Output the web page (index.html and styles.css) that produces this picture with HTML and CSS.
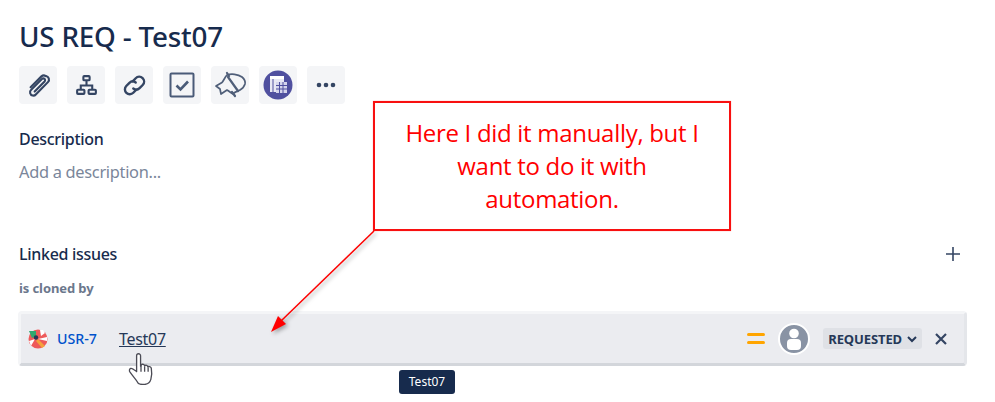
FILE: index.html
```html
<!DOCTYPE html>
<html lang="en">
<head>
<meta charset="utf-8">
<title>US REQ - Test07</title>
<link rel="stylesheet" href="styles.css">
</head>
<body>
<main class="issue">
  <h1 class="title">US REQ - Test07</h1>
  <div class="toolbar">
    <button class="tool"><svg viewBox="0 0 24 24" width="27" height="27" fill="none" stroke="#344563" stroke-width="1.900" stroke-linecap="round"><path d="M18.500 3.600a3.200 3.200 0 0 1 1.900 5.400L9.600 20a2.900 2.900 0 0 1-5-1.100 3 3 0 0 1 .9-3.100L15 6.200a1.600 1.600 0 0 1 2.400 2.200L8.600 17.400"/><path d="M5 13.500 14.600 3.900a3.400 3.400 0 0 1 3.900-.3"/></svg></button>
    <button class="tool"><svg viewBox="0 0 24 24" width="25" height="25" fill="none" stroke="#344563" stroke-width="2"><rect x="9" y="3" width="6" height="4" rx=".8"/><rect x="3" y="16" width="7" height="4" rx=".8"/><rect x="14" y="16" width="7" height="4" rx=".8"/><path d="M12 7v5M6.500 16v-4h11v4"/></svg></button>
    <button class="tool"><svg viewBox="0 0 24 24" width="29" height="29" fill="none" stroke="#344563" stroke-width="2" stroke-linecap="round"><path d="M10.500 8.500 13 6a4 4 0 0 1 5.800 5.600l-2.600 2.600a4 4 0 0 1-5.200.3"/><path d="M13.500 15.500 11 18a4 4 0 0 1-5.800-5.600l2.600-2.600a4 4 0 0 1 5.200-.3"/></svg></button>
    <button class="tool"><svg viewBox="0 0 26 26" width="26" height="26" fill="none" stroke="#4a5b78" stroke-width="2"><rect x="1.500" y="1.500" width="23" height="23" rx="1"/><path d="M7.500 13.500 11.500 17.500 19 9.500" stroke-width="2.600"/></svg></button>
    <button class="tool"><svg viewBox="0 0 38 38" width="38" height="38" fill="none" stroke="#505f79" stroke-width="1.700" stroke-linejoin="round" stroke-linecap="round"><path d="M5 20 11 16.500C13 14 14 11 16 9c4-1.500 11-1 15 2 2.500 2 3.500 4.500 3 7-1 3-3 5-5 6-3 1.500-7 3-7 4-2-1-4-3-6-4l-6 4-1-5z"/><path d="M16 7l2 3M21 26l3 4M17 11l10 14" stroke-width="2.200"/></svg></button>
    <button class="tool"><svg viewBox="0 0 30 30" width="30" height="30"><circle cx="15" cy="15" r="14.500" fill="#50509f"/><rect x="7" y="6" width="14" height="16" fill="#e8e8f4"/><rect x="7" y="6" width="14" height="3" fill="#fff"/><path d="M10 9v13" stroke="#50509f"/><rect x="13" y="12" width="11" height="11" fill="#d5d5ec"/><path d="M13 15.500h11M13 19h11M16.500 12v11M20 12v11" stroke="#50509f"/></svg></button>
    <button class="tool"><svg viewBox="0 0 24 24" width="24" height="24" fill="#344563"><circle cx="5" cy="12" r="2.300"/><circle cx="12" cy="12" r="2.300"/><circle cx="19" cy="12" r="2.300"/></svg></button>
  </div>
  <section class="description">
    <h2 class="label">Description</h2>
    <p class="placeholder">Add a description...</p>
  </section>
  <section class="linked">
    <div class="linked-head">
      <h2 class="label">Linked issues</h2>
      <svg class="plus" viewBox="0 0 16 16" width="16" height="16" stroke="#344563" stroke-width="1.600"><path d="M8 1v14M1 8h14"/></svg>
    </div>
    <h3 class="relation">is cloned by</h3>
    <div class="issue-row">
      <svg class="project" viewBox="0 0 20 20" width="20" height="20"><circle cx="10" cy="10" r="9.500" fill="#ee5a5a"/><path d="M1 2h7v5L4 9z" fill="#2fa86f"/><path d="M12 1h3l2 3-4 3z" fill="#fff"/><path d="M1 12l6-2-4 7z" fill="#fff"/><path d="M10 10l7 7-3 2-6-7z" fill="#f5a23c"/><path d="M10 10l9-2v4z" fill="#fff"/><circle cx="8" cy="8.500" r="2.200" fill="#253858"/></svg>
      <a class="key">USR-7</a>
      <a class="summary">Test07</a>
      <div class="row-end">
        <svg class="priority" viewBox="0 0 18 12" width="18" height="12" fill="#ffa500"><rect y="0" width="18" height="3" rx="1.500"/><rect y="8" width="18" height="3" rx="1.500"/></svg>
        <svg class="avatar" viewBox="0 0 32 32" width="32" height="32"><circle cx="16" cy="16" r="15" fill="#8993a4" stroke="#fff" stroke-width="2"/><circle cx="16" cy="10.500" r="4.800" fill="#fff"/><rect x="9" y="16" width="14" height="11" rx="4" fill="#fff"/></svg>
        <span class="status">REQUESTED<svg viewBox="0 0 12 12" width="12" height="12" fill="none" stroke="#253858" stroke-width="2"><path d="M2 4l4 4 4-4"/></svg></span>
        <svg class="remove" viewBox="0 0 14 14" width="14" height="14" stroke="#344563" stroke-width="2.200"><path d="M2 2l10 10M12 2 2 12"/></svg>
      </div>
    </div>
  </section>
</main>

<div class="tooltip">Test07</div>
<svg class="cursor" viewBox="2 1 22 31" width="26" height="34" fill="#fff" stroke="#4b4b55" stroke-width="1.200" stroke-linejoin="round"><path d="M9 16V3.500a1.800 1.800 0 0 1 3.600 0V13l.6-1.500c1.500-.6 2.800 0 3 1 1.400-.7 2.700-.1 3 1 1.400-.6 3 .2 3.200 1.500.6 3.500.6 7-.4 10-.6 2-2 4-5 4.500-4 .5-6 0-7-1.500-1-2.500-3.500-4.500-7-9.500-1-1.500-.6-3 .6-3.500 1.400-.5 3 1 5.400 3z"/><path d="M13 12v6M16.300 13v5M19.500 14v4" fill="none"/></svg>

<svg class="arrow" viewBox="0 0 110 106" width="110" height="106"><line x1="105" y1="2" x2="12" y2="92" stroke="#ff0000" stroke-width="1.500"/><path d="M2 103 9 87 17 95z" fill="#ff0000"/></svg>

<div class="callout">Here I did it manually, but I want to do it with automation.</div>
</body>
</html>
```
FILE: styles.css
```css
* { box-sizing: border-box; }
html, body { margin: 0; height: 402px; overflow: hidden; }
body {
  background: #fff;
  position: relative;
  font-family: "Noto Sans", "Open Sans", "Liberation Sans", sans-serif;
  color: #172b4d;
}
.issue {
  width: 967px;
  padding: 18px 0 0 19px;
  display: flex;
  flex-direction: column;
}
.title {
  margin: 0;
  font-size: 27.800px;
  line-height: 36px;
  font-weight: 500;
  letter-spacing: -0.2px;
}
.toolbar {
  display: flex;
  gap: 10px;
  margin-top: 12px;
}
.tool {
  width: 38px;
  height: 38px;
  border: 0;
  padding: 0;
  background: #f4f5f7;
  border-radius: 4px;
  display: flex;
  align-items: center;
  justify-content: center;
}
.description { margin-top: 24px; }
.label {
  margin: 0;
  font-size: 16px;
  line-height: 22px;
  font-weight: 500;
  letter-spacing: -0.3px;
}
.placeholder {
  margin: 11px 0 0;
  font-size: 16.400px;
  line-height: 22px;
  color: #7a869a;
  letter-spacing: -0.3px;
}
.linked { margin-top: 60px; }
.linked-head {
  display: flex;
  align-items: center;
  justify-content: space-between;
  padding-right: 6px;
}
.relation {
  margin: 14px 0 0;
  font-size: 13px;
  line-height: 18px;
  font-weight: 700;
  color: #6b778c;
  letter-spacing: -0.1px;
}
.issue-row {
  margin-top: 14px;
  margin-left: -1px;
  height: 55px;
  border: 3px solid #f4f5f7;
  border-bottom-color: #d3d6db;
  border-right-color: #e4e6ea;
  border-radius: 4px;
  background: #ebecf0;
  display: flex;
  align-items: center;
  padding: 0 16px 0 7px;
}
.project { flex: none; }
.key {
  margin-left: 9px;
  width: 62px;
  font-size: 14.200px;
  font-weight: 500;
  color: #0052cc;
}
.summary {
  font-size: 16px;
  letter-spacing: -0.3px;
  color: #253858;
  text-decoration: underline;
}
.row-end {
  margin-left: auto;
  display: flex;
  align-items: center;
}
.avatar { margin-left: 13px; }
.status {
  margin-left: 13px;
  display: flex;
  align-items: center;
  gap: 4px;
  height: 21px;
  padding: 0 4px 0 5px;
  background: #dfe1e6;
  border-radius: 3px;
  font-size: 13px;
  font-weight: 700;
  color: #253858;
  letter-spacing: -0.1px;
}
.remove { margin-left: 12px; }
.tooltip {
  position: absolute;
  left: 399px;
  top: 370px;
  width: 56px;
  height: 24px;
  background: #172b4d;
  border-radius: 3px;
  color: #fff;
  font-size: 12px;
  line-height: 24px;
  text-align: center;
}
.cursor { position: absolute; left: 128px; top: 353px; }
.arrow {
  position: absolute;
  left: 269px;
  top: 229px;
  filter: drop-shadow(2px 2px 2px rgba(0, 0, 0, 0.35));
}
.callout {
  position: absolute;
  left: 373px;
  top: 101px;
  width: 358px;
  height: 130px;
  padding: 13px 20px 0;
  background: #fff;
  border: 2px solid #f81010;
  box-shadow: 0 0 1px rgba(255, 0, 0, 0.4);
  color: #ff0000;
  font-family: "Open Sans", "Noto Sans", sans-serif;
  font-size: 24px;
  line-height: 33px;
  text-align: center;
  letter-spacing: -0.3px;
}
```
